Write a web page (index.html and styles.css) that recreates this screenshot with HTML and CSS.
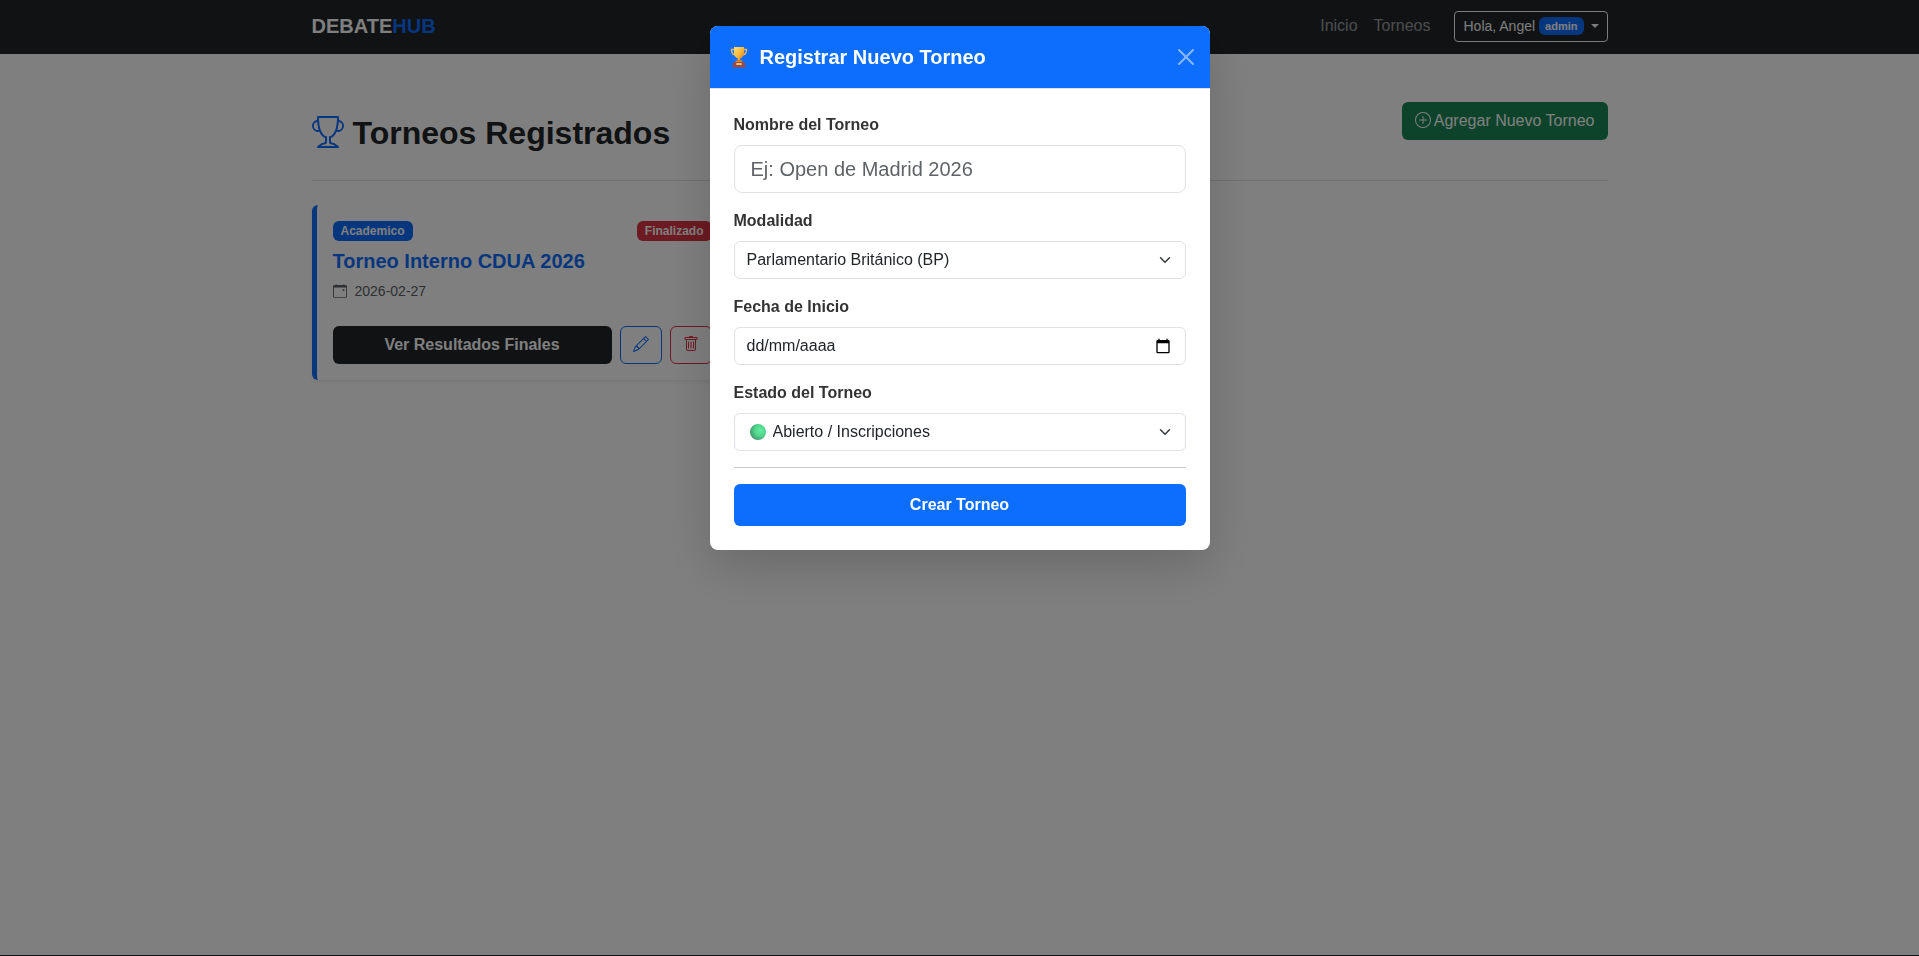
FILE: index.html
```html
<!DOCTYPE html>
<html lang="es">
<head>
    <meta charset="UTF-8">
    <meta name="viewport" content="width=device-width, initial-scale=1.0">
    <title>DebateHub - Torneos</title>
    <link rel="stylesheet" href="styles.css">
</head>
<body>
    <nav class="navbar">
        <div class="container navbar-inner">
            <a class="brand" href="#">DEBATE<span>HUB</span></a>
            <div class="nav-links">
                <a class="nav-link" href="#">Inicio</a>
                <a class="nav-link" href="#">Torneos</a>
                <button class="btn-user" type="button">Hola, Angel <span class="badge-admin">admin</span><span class="caret"></span></button>
            </div>
        </div>
    </nav>

    <main class="container main">
        <div class="page-header">
            <h1>
                <svg class="icon" width="32" height="32" viewBox="0 0 16 16" fill="currentColor"><path d="M2.5.5A.5.5 0 0 1 3 0h10a.5.5 0 0 1 .5.5q0 .807-.034 1.536a3 3 0 1 1-1.133 5.89c-.79 1.865-1.878 2.777-2.833 3.011v2.173l1.425.356c.194.048.377.135.537.255L13.3 15.1a.5.5 0 0 1-.3.9H3a.5.5 0 0 1-.3-.9l1.838-1.379c.16-.12.343-.207.537-.255L6.5 13.11v-2.173c-.955-.234-2.043-1.146-2.833-3.012a3 3 0 1 1-1.132-5.89A33 33 0 0 1 2.5.5m.099 2.54a2 2 0 0 0 .72 3.935c-.333-1.05-.588-2.346-.72-3.935m10.083 3.935a2 2 0 0 0 .72-3.935c-.133 1.59-.388 2.885-.72 3.935M3.504 1q.01.775.056 1.469c.13 2.028.457 3.546.87 4.667C5.294 9.48 6.484 10 7 10a.5.5 0 0 1 .5.5v2.61a1 1 0 0 1-.757.97l-1.426.356a.5.5 0 0 0-.179.085L4.5 15h7l-.638-.479a.5.5 0 0 0-.18-.085l-1.425-.356a1 1 0 0 1-.757-.97V10.5A.5.5 0 0 1 9 10c.516 0 1.706-.52 2.57-2.864.413-1.12.74-2.64.87-4.667q.045-.694.056-1.469z"/></svg>
                Torneos Registrados
            </h1>
            <button class="btn btn-success" type="button">
                <svg class="icon" width="16" height="16" viewBox="0 0 16 16" fill="currentColor"><path d="M8 15A7 7 0 1 1 8 1a7 7 0 0 1 0 14m0 1A8 8 0 1 0 8 0a8 8 0 0 0 0 16"/><path d="M8 4a.5.5 0 0 1 .5.5v3h3a.5.5 0 0 1 0 1h-3v3a.5.5 0 0 1-1 0v-3h-3a.5.5 0 0 1 0-1h3v-3A.5.5 0 0 1 8 4"/></svg>
                Agregar Nuevo Torneo
            </button>
        </div>

        <div class="torneos">
            <div class="card">
                <div class="card-badges">
                    <span class="badge badge-primary">Academico</span>
                    <span class="badge badge-danger">Finalizado</span>
                </div>
                <h2 class="card-title">Torneo Interno CDUA 2026</h2>
                <p class="card-date">
                    <svg class="icon" width="14" height="14" viewBox="0 0 16 16" fill="currentColor"><path d="M11 6.5a.5.5 0 0 1 .5-.5h1a.5.5 0 0 1 .5.5v1a.5.5 0 0 1-.5.5h-1a.5.5 0 0 1-.5-.5z"/><path d="M3.5 0a.5.5 0 0 1 .5.5V1h8V.5a.5.5 0 0 1 1 0V1h1a2 2 0 0 1 2 2v11a2 2 0 0 1-2 2H2a2 2 0 0 1-2-2V3a2 2 0 0 1 2-2h1V.5a.5.5 0 0 1 .5-.5M1 4v10a1 1 0 0 0 1 1h12a1 1 0 0 0 1-1V4z"/></svg>
                    2026-02-27
                </p>
                <div class="card-actions">
                    <a class="btn btn-dark" href="#">Ver Resultados Finales</a>
                    <button class="btn btn-outline-primary" type="button" aria-label="Editar">
                        <svg class="icon" width="16" height="16" viewBox="0 0 16 16" fill="currentColor"><path d="M12.146.146a.5.5 0 0 1 .708 0l3 3a.5.5 0 0 1 0 .708l-10 10a.5.5 0 0 1-.168.11l-5 2a.5.5 0 0 1-.65-.65l2-5a.5.5 0 0 1 .11-.168zM11.207 2.5 13.5 4.793 14.793 3.5 12.5 1.207zm1.586 3L10.5 3.207 4 9.707V10h.5a.5.5 0 0 1 .5.5v.5h.5a.5.5 0 0 1 .5.5v.5h.293zm-9.761 5.175-.106.106-1.528 3.821 3.821-1.528.106-.106A.5.5 0 0 1 5 12.5V12h-.5a.5.5 0 0 1-.5-.5V11h-.5a.5.5 0 0 1-.468-.325"/></svg>
                    </button>
                    <button class="btn btn-outline-danger" type="button" aria-label="Eliminar">
                        <svg class="icon" width="16" height="16" viewBox="0 0 16 16" fill="currentColor"><path d="M5.5 5.5A.5.5 0 0 1 6 6v6a.5.5 0 0 1-1 0V6a.5.5 0 0 1 .5-.5m2.5 0a.5.5 0 0 1 .5.5v6a.5.5 0 0 1-1 0V6a.5.5 0 0 1 .5-.5m3 .5a.5.5 0 0 0-1 0v6a.5.5 0 0 0 1 0z"/><path d="M14.5 3a1 1 0 0 1-1 1H13v9a2 2 0 0 1-2 2H5a2 2 0 0 1-2-2V4h-.5a1 1 0 0 1-1-1V2a1 1 0 0 1 1-1H6a1 1 0 0 1 1-1h2a1 1 0 0 1 1 1h3.5a1 1 0 0 1 1 1zM4.118 4 4 4.059V13a1 1 0 0 0 1 1h6a1 1 0 0 0 1-1V4.059L11.882 4zM2.5 3h11V2h-11z"/></svg>
                    </button>
                </div>
            </div>
        </div>
    </main>

    <footer class="footer"></footer>

    <div class="modal-backdrop">
        <div class="modal" role="dialog" aria-labelledby="modalTitle">
            <div class="modal-header">
                <svg class="trophy" width="18" height="22" viewBox="0 0 18 22">
                    <defs>
                        <linearGradient id="gold" x1="0" y1="0" x2="1" y2="1">
                            <stop offset="0" stop-color="#ffe27a"/>
                            <stop offset=".5" stop-color="#f8b83c"/>
                            <stop offset="1" stop-color="#d97a1f"/>
                        </linearGradient>
                    </defs>
                    <path d="M4.5 3.5h-3c0 3.5 1.5 5.5 4.5 5.5M13.5 3.5h3c0 3.5-1.5 5.5-4.5 5.5" fill="none" stroke="#f0b65a" stroke-width="1.4"/>
                    <path d="M4 1h10v5c0 4-2 6-3.8 6.500V15H7.800v-2.500C6 12 4 10 4 6z" fill="url(#gold)"/>
                    <path d="M6 14.5h6l1 2H5z" fill="#d98232"/>
                    <path d="M3.500 16h11l1 5.500h-13z" fill="#9c4a49"/>
                    <rect x="6" y="17" width="6" height="2" rx="1" fill="#f5c05a"/>
                </svg>
                <h2 class="modal-title" id="modalTitle">Registrar Nuevo Torneo</h2>
                <button class="btn-close" type="button" aria-label="Cerrar">
                    <svg width="16" height="16" viewBox="0 0 16 16" fill="currentColor"><path d="M.293.293a1 1 0 0 1 1.414 0L8 6.586 14.293.293a1 1 0 1 1 1.414 1.414L9.414 8l6.293 6.293a1 1 0 0 1-1.414 1.414L8 9.414l-6.293 6.293a1 1 0 0 1-1.414-1.414L6.586 8 .293 1.707a1 1 0 0 1 0-1.414"/></svg>
                </button>
            </div>
            <form class="modal-body">
                <div class="form-group">
                    <label for="nombre">Nombre del Torneo</label>
                    <input type="text" id="nombre" class="form-control form-control-lg" placeholder="Ej: Open de Madrid 2026">
                </div>
                <div class="form-group">
                    <label for="modalidad">Modalidad</label>
                    <select id="modalidad" class="form-control form-select">
                        <option>Parlamentario Británico (BP)</option>
                        <option>Academico</option>
                    </select>
                </div>
                <div class="form-group">
                    <label for="fecha">Fecha de Inicio</label>
                    <input type="text" id="fecha" class="form-control form-date" placeholder="dd/mm/aaaa">
                </div>
                <div class="form-group">
                    <label for="estado">Estado del Torneo</label>
                    <select id="estado" class="form-control form-select select-estado">
                        <option>Abierto / Inscripciones</option>
                        <option>Finalizado</option>
                    </select>
                </div>
                <hr>
                <button class="btn btn-primary" type="submit">Crear Torneo</button>
            </form>
        </div>
    </div>
</body>
</html>
```
FILE: styles.css
```css
* {
    box-sizing: border-box;
    margin: 0;
    padding: 0;
}
body {
    display: flex;
    flex-direction: column;
    min-height: 100vh;
    background: #fff;
    color: #212529;
    font-family: Arial, "Liberation Sans", sans-serif;
    font-size: 16px;
    line-height: 24px;
}
a {
    text-decoration: none;
}
button, input, select {
    font-family: inherit;
}
.container {
    width: 100%;
    max-width: 1320px;
    margin: 0 auto;
    padding: 0 12px;
}
.icon {
    margin-bottom: 2px;
}

/* Navbar */
.navbar {
    background: #212529;
    padding: 6px 0 8px;
}
.navbar-inner {
    display: flex;
    align-items: center;
    justify-content: space-between;
    min-height: 40px;
}
.brand {
    color: #fff;
    font-size: 20px;
    font-weight: bold;
    line-height: 30px;
}
.brand span {
    color: #0d6efd;
}
.nav-links {
    display: flex;
    align-items: center;
}
.nav-link {
    color: rgba(255, 255, 255, 0.55);
    padding: 8px;
}
.btn-user {
    display: flex;
    align-items: center;
    height: 31px;
    margin-left: 16px;
    padding: 4px 8px;
    background: transparent;
    border: 1px solid #f8f9fa;
    border-radius: 4px;
    color: #f8f9fa;
    font-size: 14px;
    line-height: 21px;
}
.badge-admin {
    margin-left: 4px;
    padding: 4px 6px;
    background: #0d6efd;
    border-radius: 6px;
    color: #fff;
    font-size: 11px;
    font-weight: bold;
    line-height: 10px;
}
.caret {
    margin-left: 7px;
    border-top: 4px solid;
    border-left: 4px solid transparent;
    border-right: 4px solid transparent;
}

/* Torneos */
.main {
    flex: 1;
    padding-top: 48px;
}
.page-header {
    display: flex;
    align-items: flex-start;
    justify-content: space-between;
    padding-bottom: 28px;
    margin-bottom: 24px;
    border-bottom: 1px solid #dee2e6;
}
h1 {
    display: flex;
    align-items: center;
    gap: 9px;
    padding-top: 12px;
    font-size: 32px;
    line-height: 38px;
}
h1 svg {
    color: #0d6efd;
}
.btn {
    display: flex;
    align-items: center;
    justify-content: center;
    padding: 6px 12px;
    border: 1px solid transparent;
    border-radius: 6px;
    font-size: 16px;
    line-height: 24px;
    cursor: pointer;
}
.btn-success {
    gap: 3px;
    background: #198754;
    color: #fff;
}
.torneos {
    display: grid;
    grid-template-columns: repeat(3, 1fr);
    gap: 24px;
}
.card {
    padding: 16px;
    background: #fff;
    border-left: 5px solid #0d6efd;
    border-radius: 6px;
    box-shadow: 0 2px 4px rgba(0, 0, 0, 0.075);
}
.card-badges {
    display: flex;
    justify-content: space-between;
    margin-bottom: 8px;
}
.badge {
    padding: 4px 8px;
    border-radius: 6px;
    color: #fff;
    font-size: 12px;
    font-weight: bold;
    line-height: 12px;
}
.badge-primary {
    background: #0d6efd;
}
.badge-danger {
    background: #dc3545;
}
.card-title {
    margin-bottom: 8px;
    color: #0d6efd;
    font-size: 20px;
    line-height: 24px;
}
.card-date {
    display: flex;
    align-items: center;
    gap: 8px;
    margin-bottom: 24px;
    color: #5c6166;
    font-size: 14px;
    line-height: 21px;
}
.card-actions {
    display: flex;
    gap: 8px;
}
.btn-dark {
    flex: 1;
    background: #212529;
    color: #fff;
    font-weight: bold;
}
.btn-outline-primary {
    background: transparent;
    border-color: #0d6efd;
    color: #0d6efd;
}
.btn-outline-danger {
    background: transparent;
    border-color: #dc3545;
    color: #dc3545;
}
.footer {
    height: 1px;
    background: #212529;
}

/* Modal */
.modal-backdrop {
    position: fixed;
    inset: 0;
    background: rgba(0, 0, 0, 0.5);
}
.modal {
    max-width: 500px;
    margin: 26px auto;
    background: #fff;
    border-radius: 8px;
    box-shadow: 0 16px 48px rgba(0, 0, 0, 0.175);
    overflow: hidden;
}
.modal-header {
    display: flex;
    align-items: center;
    padding: 16px 16px 16px 20px;
    background: #0d6efd;
    border-bottom: 1px solid #dee2e6;
    color: #fff;
}
.modal-title {
    flex: 1;
    margin-left: 12px;
    font-size: 20px;
    line-height: 30px;
}
.btn-close {
    display: flex;
    background: transparent;
    border: none;
    color: #fff;
    opacity: 0.5;
    cursor: pointer;
}
.modal-body {
    padding: 24px;
}
.form-group {
    margin-bottom: 16px;
}
label {
    display: block;
    margin-bottom: 8px;
    color: #333;
    font-weight: bold;
}
.form-control {
    display: block;
    width: 100%;
    height: 38px;
    padding: 6px 12px;
    background-color: #fff;
    border: 1px solid #dee2e6;
    border-radius: 6px;
    color: #212529;
    font-size: 16px;
    line-height: 24px;
}
.form-control-lg {
    height: 48px;
    padding: 8px 16px;
    border-radius: 8px;
    font-size: 20px;
    line-height: 30px;
}
.form-control::placeholder {
    color: #5f6368;
    opacity: 1;
}
.form-select {
    appearance: none;
    background-image: url("data:image/svg+xml,%3csvg xmlns='http://www.w3.org/2000/svg' viewBox='0 0 16 16'%3e%3cpath fill='none' stroke='%23343a40' stroke-linecap='round' stroke-linejoin='round' stroke-width='2' d='m2 5 6 6 6-6'/%3e%3c/svg%3e");
    background-repeat: no-repeat;
    background-position: right 12px center;
    background-size: 16px 12px;
}
.form-date {
    background-image: url("data:image/svg+xml,%3csvg xmlns='http://www.w3.org/2000/svg' viewBox='0 0 24 24'%3e%3cpath d='M20 3h-1V1h-2v2H7V1H5v2H4c-1.1 0-2 .9-2 2v16c0 1.1.9 2 2 2h16c1.1 0 2-.9 2-2V5c0-1.1-.9-2-2-2zm0 18H4V8h16v13z'/%3e%3c/svg%3e");
    background-repeat: no-repeat;
    background-position: right 14px center;
    background-size: 16px 16px;
}
.form-date::placeholder {
    color: #212529;
}
/* flecha + punto verde de "abierto" */
.select-estado {
    padding-left: 38px;
    background-image: url("data:image/svg+xml,%3csvg xmlns='http://www.w3.org/2000/svg' viewBox='0 0 16 16'%3e%3cpath fill='none' stroke='%23343a40' stroke-linecap='round' stroke-linejoin='round' stroke-width='2' d='m2 5 6 6 6-6'/%3e%3c/svg%3e"), url("data:image/svg+xml,%3csvg xmlns='http://www.w3.org/2000/svg' viewBox='0 0 16 16'%3e%3cdefs%3e%3cradialGradient id='g' cx='.65' cy='.4' r='.7'%3e%3cstop offset='0' stop-color='%2362ec9f'/%3e%3cstop offset='.5' stop-color='%2352d48c'/%3e%3cstop offset='1' stop-color='%233f8f6b'/%3e%3c/radialGradient%3e%3c/defs%3e%3ccircle cx='8' cy='8' r='8' fill='url(%23g)'/%3e%3c/svg%3e");
    background-position: right 12px center, 15px center;
    background-size: 16px 12px, 16px 16px;
}
hr {
    margin: 16px 0;
    border: none;
    border-top: 1px solid #c8c9ca;
}
.btn-primary {
    width: 100%;
    padding: 8px 12px;
    background: #0d6efd;
    color: #fff;
    font-weight: bold;
}
```
